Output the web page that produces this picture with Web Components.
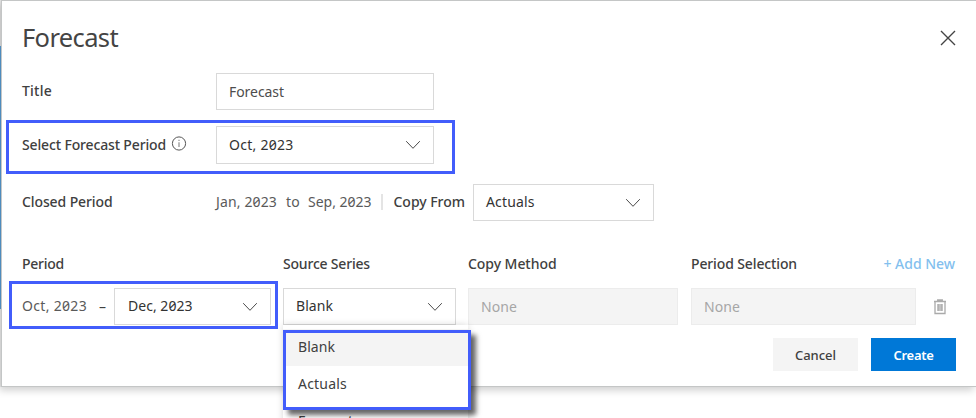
<!DOCTYPE html>
<html lang="en">
<head>
<meta charset="utf-8">
<title>Forecast</title>
<style>
html,body{margin:0;height:418px;overflow:hidden;background:#fff}
body{font:14px/20px "Noto Sans","Open Sans",sans-serif;color:#404040;font-variant-numeric:slashed-zero}
</style>
</head>
<body>
<forecast-page></forecast-page>
<script>
const shadow=(el,html)=>{el.attachShadow({mode:'open'}).innerHTML=html;};

/* Text run whose tracking is adjusted to fill the width in "w". */
class FitText extends HTMLElement{
  connectedCallback(){
    if(this.shadowRoot)return;
    shadow(this,`<style>:host{display:block;white-space:pre;width:max-content;flex:none}
      span{display:inline-block}</style><span><slot></slot></span>`);
    const w=+this.getAttribute('w'),s=this.shadowRoot.querySelector('span'),n=this.textContent.length;
    if(w){
      s.style.letterSpacing='0px';
      const gap=(w-s.getBoundingClientRect().width)/n;
      s.style.letterSpacing=gap.toFixed(3)+'px';
    }
  }
}
customElements.define('fit-text',FitText);

class UiIcon extends HTMLElement{
  connectedCallback(){
    const icons={
      chevron:[16,10,'<path d="M1.2 1.2 8 8.3 14.8 1.2" fill="none" stroke="#4a4a4a" stroke-width="1"/>'],
      close:[16,16,'<path d="M1 1 15 15M15 1 1 15" fill="none" stroke="#444" stroke-width="1.4"/>'],
      info:[16,16,'<circle cx="8" cy="7.5" r="6.6" fill="none" stroke="#555" stroke-width="1"/><path d="M7.5 3.8h1v1.3h-1zM7.5 6.3h1v4.7h-1z" fill="#777"/>'],
      trash:[14,16,'<path d="M1 2.5h12M4.7 2.3V1h4.6v1.3M2 2.5v12h10v-12" fill="none" stroke="#aaa" stroke-width="1.3"/><path d="M4 5h6v7H4z" fill="#c2c2c2"/><path d="M5.5 5v7M8.5 5v7" stroke="#b2b2b2"/>']
    };
    const [w,h,p]=icons[this.getAttribute('name')];
    shadow(this,`<style>:host{display:block;width:${w}px;height:${h}px;flex:none}svg{display:block}</style><svg width="${w}" height="${h}" viewBox="0 0 ${w} ${h}">${p}</svg>`);
  }
}
customElements.define('ui-icon',UiIcon);

class UiField extends HTMLElement{
  connectedCallback(){
    shadow(this,`<style>
      :host{display:flex;box-sizing:border-box;height:37px;border:1px solid #d9d9d9;background:#fff;padding:0 12px;align-items:center;justify-content:space-between;color:#333;flex:none}
      :host([disabled]){background:#f4f4f4;border-color:#ececec;color:#a6a6a6;padding-left:12px}
      :host([select]){padding-bottom:1px}
      ui-icon{margin-top:1px}
    </style><slot></slot>${this.hasAttribute('select')?'<ui-icon name="chevron"></ui-icon>':''}`);
  }
}
customElements.define('ui-field',UiField);

class UiButton extends HTMLElement{
  connectedCallback(){
    shadow(this,`<style>
      :host{display:flex;width:85px;height:33px;background:#f4f4f4;align-items:center;justify-content:center;font-size:13px;font-weight:500;padding-top:1px;box-sizing:border-box}
      :host([primary]){background:#0078d7;color:#fff;font-weight:600}
    </style><slot></slot>`);
  }
}
customElements.define('ui-button',UiButton);

class MenuPanel extends HTMLElement{
  connectedCallback(){
    shadow(this,`<style>
      :host{display:block;width:185px;height:100px;background:#fff;box-shadow:0 0 7px rgba(0,0,0,.16);padding-top:4px;box-sizing:border-box}
      div{height:37px;padding:0 0 2px 15px;display:flex;align-items:center;box-sizing:border-box}
      .on{background:#f4f4f4}
    </style><div class="on"><fit-text w="37">Blank</fit-text></div><div><fit-text w="49">Actuals</fit-text></div><div><fit-text w="55">Forecast</fit-text></div>`);
  }
}
customElements.define('menu-panel',MenuPanel);

class CalloutBox extends HTMLElement{
  connectedCallback(){
    shadow(this,`<style>:host{display:block;box-sizing:border-box;border:3px solid #425dfb}
    :host([raised]){box-shadow:5px 5px 5px rgba(0,0,0,.6)}</style>`);
  }
}
customElements.define('callout-box',CalloutBox);

class ForecastPage extends HTMLElement{
  connectedCallback(){
    shadow(this,`<style>
      :host{display:block;position:relative;width:976px;height:418px;overflow:hidden;background:linear-gradient(#e6e6e6 46px,#5a9fd9 46px 309px,#f0f0f0 309px 387px,#fff 387px) left/1px 100% no-repeat #fff}
      main{box-sizing:border-box;margin-left:1px;width:975px;height:387px;background:#fff;border:1px solid #c4c6c6;border-right:0;padding:0 20px 0 20px;box-shadow:-2px 3px 8px rgba(0,0,0,.2)}
      header{height:72px;display:flex;justify-content:space-between;box-sizing:border-box;padding-top:18px;font-size:25.5px;font-weight:400;line-height:36px;color:#444}
      header ui-icon{margin-top:11px}
      .row{display:flex;align-items:center}
      .label{width:194px;display:flex;align-items:center;gap:5px;font-weight:500;flex:none}
      .r1{height:37px}.r2{height:38px;margin-top:16px}.r3{height:37px;margin-top:20px}
      .r3 .label,.r3 .txt{padding-bottom:2px}.txt{color:#5a5a5a}
      .r1 .label{padding-bottom:2px}
      .bar{width:2px;height:16px;background:#e4e4e4;margin:0 9px 1px 9px}
      .grid{display:grid;grid-template-columns:249px 173px 211px 225px 27px;column-gap:12px;margin-top:33px;grid-template-rows:20px 37px;row-gap:14px;font-weight:500}
      .grid>*{min-width:0}
      .cell{display:flex;align-items:center;font-weight:400}
      .add{color:#83bfee;font-weight:500;justify-self:end}
      footer{display:flex;justify-content:flex-end;gap:13px;padding:13px 0 0}
      .over{position:absolute}
    </style>
    <main>
      <header><fit-text w="96">Forecast</fit-text><ui-icon name="close"></ui-icon></header>
      <div class="row r1"><div class="label"><fit-text w="30">Title</fit-text></div><ui-field style="width:218px"><fit-text w="55" style="color:#4d4d4d">Forecast</fit-text></ui-field></div>
      <div class="row r2"><div class="label"><fit-text w="144">Select Forecast Period</fit-text><ui-icon name="info" style="margin-bottom:3px"></ui-icon></div><ui-field select style="width:218px;height:38px"><fit-text w="64.5">Oct, 2023</fit-text></ui-field></div>
      <div class="row r3"><div class="label"><fit-text w="90.5">Closed Period</fit-text></div>
        <fit-text class="txt" w="61">Jan, 2023</fit-text><fit-text class="txt" w="14" style="margin:0 8px 0 9px">to</fit-text><fit-text class="txt" w="63.5">Sep, 2023</fit-text><span class="bar"></span><fit-text class="txt" w="71.5" style="font-weight:500;color:#404040;margin-left:2px">Copy From</fit-text>
        <ui-field select style="width:181px;margin-left:8px"><fit-text w="48.5">Actuals</fit-text></ui-field></div>
      <div class="grid">
        <fit-text w="42">Period</fit-text><fit-text w="87">Source Series</fit-text><fit-text w="88.5">Copy Method</fit-text><fit-text w="106">Period Selection</fit-text><fit-text class="add" w="71.5">+ Add New</fit-text>
        <div class="cell"><fit-text w="65" style="color:#5a5a5a;margin-bottom:2px">Oct, 2023</fit-text><fit-text style="width:7px;margin:0 8px 0 12px">–</fit-text><ui-field select style="width:157px;padding-left:13px"><fit-text w="64.5">Dec, 2023</fit-text></ui-field></div>
        <div class="cell"><ui-field select style="width:173px"><fit-text w="37">Blank</fit-text></ui-field></div>
        <div class="cell"><ui-field disabled style="width:210px"><fit-text w="36">None</fit-text></ui-field></div>
        <div class="cell"><ui-field disabled style="width:225px"><fit-text w="36">None</fit-text></ui-field></div>
        <div class="cell"><ui-icon name="trash" style="margin-left:5px"></ui-icon></div>
      </div>
      <footer><ui-button><fit-text w="41">Cancel</fit-text></ui-button><ui-button primary><fit-text w="40">Create</fit-text></ui-button></footer>
    </main>
    <menu-panel class="over" style="left:283px;top:325px"></menu-panel>
    <callout-box class="over" style="left:6px;top:120px;width:449px;height:54px"></callout-box>
    <callout-box class="over" style="left:9px;top:281px;width:269px;height:48px"></callout-box>
    <callout-box raised class="over" style="left:283px;top:330px;width:188px;height:80px"></callout-box>`);
  }
}
customElements.define('forecast-page',ForecastPage);
</script>
</body>
</html>
